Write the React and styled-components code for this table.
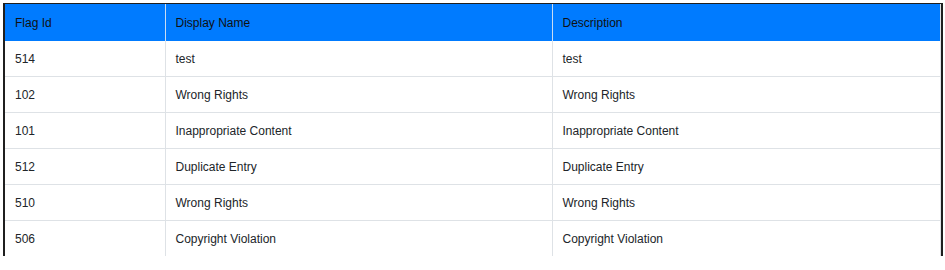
import React from 'react'
import styled, { createGlobalStyle } from 'styled-components'

const GlobalStyle = createGlobalStyle`
body {
  margin: 0;
  background: #fff;
  font-family: "Liberation Sans", Arial, sans-serif;
}
`

const Frame = styled.div`
margin: 3px 2px 0 3px;
border: 2px solid #1f1f1f;
border-bottom: none;
border-top-width: 1px;
`

const Table = styled.table`
width: 100%;
border-collapse: collapse;
table-layout: fixed;
font-size: 12px;
color: #212529;
border-right: 1px solid #dee2e6;
`

const HeadCell = styled.th`
background: #007bff;
color: #111;
font-weight: normal;
text-align: left;
height: 37px;
padding: 0 10px;
border-left: 1px solid #c9dcf2;
&:first-child { border-left: none; }
`

const Row = styled.tr`
border-top: 1px solid #dee2e6;
&:first-child { border-top: none; }
`

const Cell = styled.td`
height: 34px;
padding: 1px 10px 0;
border-left: 1px solid #dee2e6;
&:first-child { border-left: none; }
`

const flags = [
  { id: 514, name: 'test', desc: 'test' },
  { id: 102, name: 'Wrong Rights', desc: 'Wrong Rights' },
  { id: 101, name: 'Inappropriate Content', desc: 'Inappropriate Content' },
  { id: 512, name: 'Duplicate Entry', desc: 'Duplicate Entry' },
  { id: 510, name: 'Wrong Rights', desc: 'Wrong Rights' },
  { id: 506, name: 'Copyright Violation', desc: 'Copyright Violation' },
]

const App = () => {
  return (
    <>
      <GlobalStyle />
      <Frame>
        <Table>
          <colgroup>
            <col style={{ width: 160 }} />
            <col style={{ width: 387 }} />
            <col />
          </colgroup>
          <thead>
            <tr>
              <HeadCell>Flag Id</HeadCell>
              <HeadCell>Display Name</HeadCell>
              <HeadCell>Description</HeadCell>
            </tr>
          </thead>
          <tbody>
            {flags.map(f => (
              <Row key={f.id}>
                <Cell>{f.id}</Cell>
                <Cell>{f.name}</Cell>
                <Cell>{f.desc}</Cell>
              </Row>
            ))}
          </tbody>
        </Table>
      </Frame>
    </>
  )
}

export default App
